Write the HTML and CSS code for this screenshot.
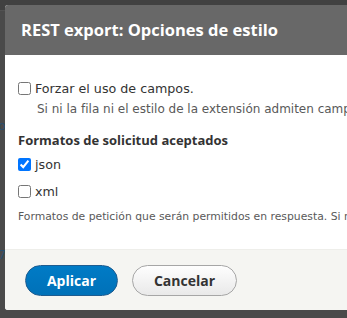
FILE: index.html
```html
<!DOCTYPE html>
<html lang="es">
<head>
<meta charset="utf-8">
<title>REST export: Opciones de estilo</title>
<link rel="stylesheet" href="styles.css">
</head>
<body>
<div class="page-bg">
  <div class="bg-top"></div>
  <span class="bg-link bg-link-1">o</span>
  <span class="bg-link bg-link-2">7</span>
</div>
<div class="dialog" role="dialog">
  <div class="dialog-title">REST export: Opciones de estilo</div>
  <div class="dialog-body">
    <div class="form-item">
      <label class="check-row"><input type="checkbox"> <span>Forzar el uso de campos.</span></label>
      <div class="desc desc-indent">Si ni la fila ni el estilo de la extensión admiten campos, ninguno de los dos se utilizará.</div>
    </div>
    <div class="fieldset">
      <div class="legend">Formatos de solicitud aceptados</div>
      <label class="check-row row-json"><input type="checkbox" checked> <span>json</span></label>
      <label class="check-row row-xml"><input type="checkbox"> <span>xml</span></label>
      <div class="desc small">Formatos de petición que serán permitidos en respuesta. Si no se selecciona ninguno, todos serán permitidos.</div>
    </div>
  </div>
  <div class="dialog-footer">
    <button class="btn btn-primary">Aplicar</button>
    <button class="btn btn-secondary">Cancelar</button>
  </div>
</div>
</body>
</html>
```
FILE: styles.css
```css
html, body {
  margin: 0;
  padding: 0;
  width: 347px;
  height: 318px;
  overflow: hidden;
  background: #4a4a4a;
  font-family: "DejaVu Sans", sans-serif;
}
body {
  position: relative;
  padding: 5px 0 0 5px;
  box-sizing: border-box;
}
.page-bg {
  position: absolute;
  inset: 0;
}
.bg-top {
  height: 10px;
  background: #414141;
  border-bottom: 1px solid #525252;
}
.bg-link {
  position: absolute;
  left: -2px;
  color: #2a4f6e;
  font-size: 13px;
}
.bg-link-1 { top: 118px; }
.bg-link-2 { top: 247px; }

.dialog {
  position: relative;
  width: 420px;
  background: #fff;
  border-radius: 3px;
  overflow: hidden;
}
.dialog-title {
  height: 50px;
  box-sizing: border-box;
  background: #686868;
  color: #fff;
  font-family: "Open Sans", "DejaVu Sans", sans-serif;
  font-weight: 700;
  font-size: 16.5px;
  line-height: 50px;
  padding-left: 16px;
  white-space: nowrap;
}
.dialog-body {
  box-sizing: border-box;
  padding: 24px 13px 0 13px;
  height: 194px;
  color: #333;
  white-space: nowrap;
}
.check-row {
  display: flex;
  align-items: center;
  gap: 3px;
  font-size: 12.7px;
  height: 19px;
  line-height: 19px;
}
.check-row input {
  margin: 0 1px 0 0;
  width: 13px;
  height: 13px;
}
.desc {
  color: #595959;
  font-size: 12px;
  line-height: 14px;
}
.desc-indent {
  padding-left: 19px;
  margin-top: 4px;
}
.legend {
  font-family: "Open Sans", "DejaVu Sans", sans-serif;
  font-weight: 700;
  font-size: 13px;
  line-height: 18px;
  margin-top: 15px;
}
.row-json {
  margin-top: 6px;
}
.row-xml {
  margin-top: 8px;
}
.desc.small {
  font-size: 10.8px;
  margin-top: 9px;
}
.dialog-footer {
  background: #f5f5f2;
  border-top: 1px solid #eeeeea;
  height: 61px;
  box-sizing: border-box;
  display: flex;
  align-items: center;
  gap: 14px;
  padding-left: 20px;
}
.btn {
  height: 31px;
  border-radius: 20px;
  font-family: "Open Sans", "DejaVu Sans", sans-serif;
  font-weight: 700;
  font-size: 14px;
  padding: 0;
}
.btn-primary {
  width: 93px;
  background: linear-gradient(#007bc6, #0071b8);
  border: 1px solid #1e5c90;
  color: #fff;
}
.btn-secondary {
  width: 105px;
  background: linear-gradient(#fefefe, #e9e9e9);
  border: 1px solid #a6a6a6;
  color: #333;
}
```
